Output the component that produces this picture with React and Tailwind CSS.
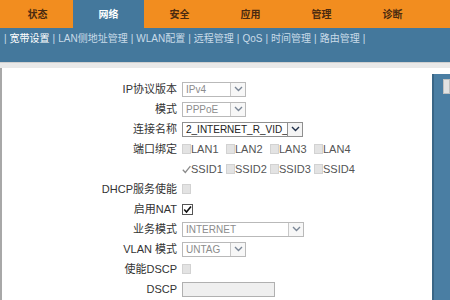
import React from "react";

const FONT = { fontFamily: '"Liberation Sans", "Noto Sans CJK SC", sans-serif' };

function Chevron({ dark }) {
  return (
    <svg width="9" height="6" viewBox="0 0 9 6">
      <path d="M1 1 L4.5 4.5 L8 1" fill="none" stroke={dark ? "#1f2f4a" : "#7a8696"} strokeWidth="1.4" />
    </svg>
  );
}

function Select({ value, width, enabled }) {
  return (
    <div
      className={`h-[15px] flex items-stretch border ${enabled ? "border-[#8f8f8f] bg-white text-[#222]" : "border-[#b9b9b9] bg-white text-[#8c8c8c]"}`}
      style={{ width }}
    >
      <div className="flex-1 pl-[3px] leading-[13px] text-[10px] overflow-hidden whitespace-nowrap">{value}</div>
      <div className={`w-[15px] flex items-center justify-center border-l ${enabled ? "border-[#8f8f8f] bg-[#f4f4f4]" : "border-[#c8c8c8] bg-[#f7f7f7]"}`}>
        <Chevron dark={enabled} />
      </div>
    </div>
  );
}

function Box({ checked, enabled }) {
  if (enabled) {
    return (
      <div className="w-[11px] h-[11px] border border-[#555] bg-white flex items-center justify-center">
        <svg width="9" height="9" viewBox="0 0 9 9">
          <path d="M1.2 4.5 L3.5 7 L8 1.5" fill="none" stroke="#111" strokeWidth="1.6" />
        </svg>
      </div>
    );
  }
  if (checked) {
    return (
      <div className="w-[9px] h-[10px] flex items-center justify-center">
        <svg width="9" height="9" viewBox="0 0 9 9">
          <path d="M0.8 4.8 L3.3 7.4 L8.4 1.2" fill="none" stroke="#8a8a8a" strokeWidth="1.3" />
        </svg>
      </div>
    );
  }
  return <div className="w-[9px] h-[10px] bg-[#e3e3e3] border border-[#d2d2d2]" />;
}

function CheckItem({ label, checked }) {
  return (
    <div className="w-[44px] flex items-center">
      <Box checked={checked} />
      <span className="text-[11px] text-[#555]">{label}</span>
    </div>
  );
}

function Row({ label, children }) {
  return (
    <div className="flex items-center h-[20px]">
      <div className="w-[175px] text-right text-[11px] text-[#333] whitespace-nowrap">{label}</div>
      <div className="pl-[5px] flex items-center">{children}</div>
    </div>
  );
}

export default function App() {
  const tabs = ["状态", "网络", "安全", "应用", "管理", "诊断"];
  const subs = ["宽带设置", "LAN侧地址管理", "WLAN配置", "远程管理", "QoS", "时间管理", "路由管理"];
  return (
    <div className="w-[450px] h-[300px] overflow-hidden bg-white flex flex-col" style={FONT}>
      <div className="h-[28px] bg-[#f28d1f] flex pl-[2px] shrink-0">
        {tabs.map((t, i) => (
          <div
            key={t}
            className={`w-[71px] flex items-center justify-center text-[10px] font-bold ${i === 1 ? "bg-[#44789c] text-white" : "text-[#4a2a10]"}`}
          >
            {t}
          </div>
        ))}
      </div>
      <div className="h-[34px] bg-[#44789c] shrink-0 pl-[4px] pt-[3px] flex items-start text-[10px] text-[#c9dbe8] whitespace-nowrap">
        <span className="mr-[3px]">|</span>
        {subs.map((s, i) => (
          <React.Fragment key={s}>
            <span className={i === 0 ? "text-white" : ""}>{s}</span>
            <span className="mx-[3px]">|</span>
          </React.Fragment>
        ))}
      </div>
      <div className="h-[6px] shrink-0 bg-[#e9e9e9] border-t border-[#d0d0d0]" />
      <div className="flex-1 flex min-h-0">
        <div className="w-[2px] bg-[#a8a8a8]" />
        <div className="flex-1 pt-[11px] flex flex-col">
          <Row label="IP协议版本"><Select value="IPv4" width={64} /></Row>
          <Row label="模式"><Select value="PPPoE" width={64} /></Row>
          <Row label="连接名称"><Select value="2_INTERNET_R_VID_" width={121} enabled /></Row>
          <Row label="端口绑定">
            <div className="flex">
              <CheckItem label="LAN1" />
              <CheckItem label="LAN2" />
              <CheckItem label="LAN3" />
              <CheckItem label="LAN4" />
            </div>
          </Row>
          <Row label="">
            <div className="flex">
              <CheckItem label="SSID1" checked />
              <CheckItem label="SSID2" />
              <CheckItem label="SSID3" />
              <CheckItem label="SSID4" />
            </div>
          </Row>
          <Row label="DHCP服务使能"><Box /></Row>
          <Row label="启用NAT"><Box checked enabled /></Row>
          <Row label="业务模式"><Select value="INTERNET" width={122} /></Row>
          <Row label="VLAN 模式"><Select value="UNTAG" width={64} /></Row>
          <Row label="使能DSCP"><Box /></Row>
          <Row label="DSCP"><div className="w-[93px] h-[15px] border border-[#b0b0b0] bg-[#efefef]" /></Row>
        </div>
        <div className="w-[18px] mt-[6px] bg-[#4a7ea3] border-l-[2px] border-[#3a6686] pl-[9px] pt-[5px]">
          <div className="w-[7px] h-[15px] bg-[#e2e2e2] border border-[#c0c0c0]" />
        </div>
      </div>
    </div>
  );
}
